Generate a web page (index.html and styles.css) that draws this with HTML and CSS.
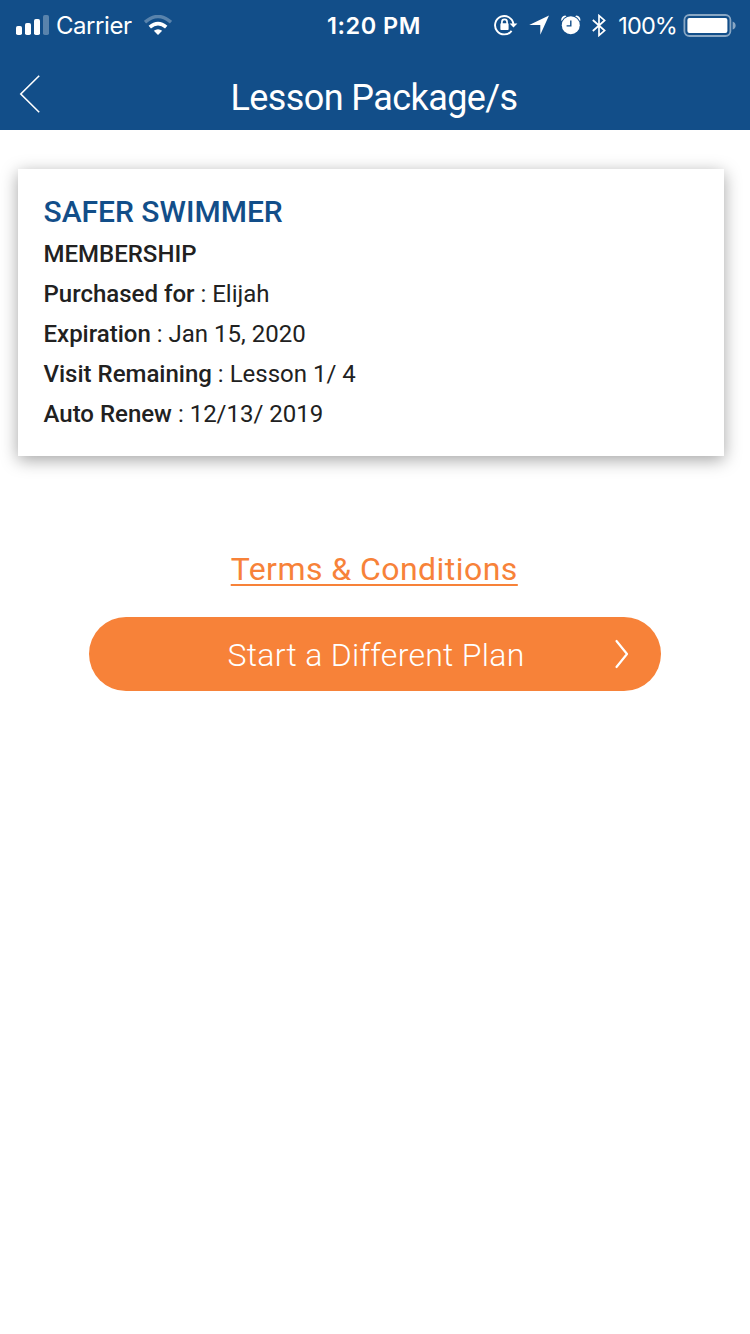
FILE: index.html
```
<!DOCTYPE html>
<html lang="en">
<head>
<meta charset="utf-8">
<title>Lesson Package/s</title>
<link rel="stylesheet" href="styles.css">
</head>
<body>
<header class="top">
  <div class="status">
    <div class="status-left">
      <svg class="signal" width="33" height="20" viewBox="0 0 33 20" fill="#fff">
        <rect x="0" y="11" width="6" height="9" rx="1.8"/>
        <rect x="9" y="8" width="6" height="12" rx="1.8"/>
        <rect x="18" y="4" width="6" height="16" rx="1.8"/>
        <rect x="27" y="0" width="6" height="20" rx="1.8" opacity=".3"/>
      </svg>
      <span class="carrier">Carrier</span>
      <svg class="wifi" width="28" height="20" viewBox="0 0 28 20" fill="none" stroke="#fff">
        <path d="M1 7.2Q14 -4.2 27 7.2" stroke-width="3.4" opacity=".3"/>
        <path d="M5.8 12.2Q14 5.2 22.2 12.2" stroke-width="3.6"/>
        <path d="M14 20L9.8 15.8Q14 12.6 18.2 15.8Z" fill="#fff" stroke="none"/>
      </svg>
    </div>
    <span class="time">1:20 PM</span>
    <div class="status-right">
      <svg class="lock" width="24" height="22" viewBox="0 0 24 22" fill="none" stroke="#fff">
        <path d="M17.6 16.8A9.2 9.2 0 1 1 19.4 10" stroke-width="1.9"/>
        <path d="M15.6 9.4H23.4L19.5 13.6Z" fill="#fff" stroke="none"/>
        <rect x="6.4" y="9.2" width="8.2" height="6.8" rx=".8" fill="#fff" stroke="none"/>
        <path d="M7.9 10V7.9a2.6 2.6 0 0 1 5.2 0V10" stroke-width="1.7"/>
      </svg>
      <svg class="arrow" width="21" height="21" viewBox="0 0 21 21" fill="#fff">
        <path d="M20 .6L11.3 19.8V10.1H.2Z"/>
      </svg>
      <svg class="alarm" width="20" height="20" viewBox="0 0 20 20">
        <circle cx="9.8" cy="10.2" r="9" fill="#fff"/>
        <path d="M9.8 5.6V10.9H5.6" fill="none" stroke="#124e89" stroke-width="1.4"/>
        <path d="M.3 5.7Q-.3 1.5 4.2.5L5.5 1.3Q2.5 2.8.9 5.7ZM19.3 5.7Q19.9 1.5 15.4.5L14.1 1.3Q17.1 2.8 18.7 5.7Z" fill="#fff"/>
      </svg>
      <svg class="bluetooth" width="14" height="23" viewBox="0 0 14 23" fill="none" stroke="#fff" stroke-width="1.7">
        <path d="M.8 6L12.6 16.6L7 21.4V1.6L12.6 6.4L.8 17"/>
      </svg>
      <span class="percent">100%</span>
      <svg class="battery" width="53" height="23" viewBox="0 0 53 23">
        <rect x="1.4" y="1" width="46" height="21" rx="5" fill="none" stroke="#fff" stroke-width="1.8" opacity=".5"/>
        <rect x="4.4" y="4" width="40" height="15" rx="2" fill="#fff"/>
        <path d="M49.6 7.5Q52.6 8.5 52.6 11.5T49.6 15.5Z" fill="#fff" opacity=".5"/>
      </svg>
    </div>
  </div>
  <nav class="nav">
    <svg class="back" width="22" height="38" viewBox="0 0 22 38" fill="none" stroke="#fff" stroke-width="1.6">
      <path d="M20.2 .8L1.8 19L20.2 37.2"/>
    </svg>
    <h1 class="title">Lesson Package/s</h1>
  </nav>
</header>
<main class="content">
  <section class="card">
    <h2 class="plan">SAFER SWIMMER</h2>
    <p class="row"><b>MEMBERSHIP</b></p>
    <p class="row"><b>Purchased for</b> : Elijah</p>
    <p class="row"><b>Expiration</b> : Jan 15, 2020</p>
    <p class="row"><b>Visit Remaining</b> : Lesson 1/ 4</p>
    <p class="row"><b>Auto Renew</b> : 12/13/ 2019</p>
  </section>
  <a class="terms">Terms &amp; Conditions</a>
  <button class="cta">
    <span class="cta-label">Start a Different Plan</span>
    <svg class="chevron" width="16" height="30" viewBox="0 0 16 30" fill="none" stroke="#fff" stroke-width="2.2" stroke-linecap="round" stroke-linejoin="round">
      <path d="M2.5 2L13 15L2.5 28"/>
    </svg>
  </button>
</main>
</body>
</html>
```
FILE: styles.css
```
* { box-sizing: border-box; }
body { margin: 0; min-height: 1334px; background: #fff; font-family: Roboto, sans-serif; color: #212121; }
.top { height: 130px; background: #124e89; color: #fff; }
.status { display: grid; grid-template-columns: 1fr auto 1fr; height: 50px; padding: 0 14px 0 16px; font: 400 24px/50px Inter, sans-serif; }
.status-left, .status-right { display: flex; align-items: center; }
.status-right { justify-content: flex-end; }
.signal, .wifi { margin-bottom: 1px; }
.carrier { margin: 1px 0 0 7px; letter-spacing: -.45px; }
.wifi { margin-left: 12px; }
.time { padding: 1px 4px 0 0; font-weight: 600; font-size: 23.5px; letter-spacing: .5px; }
.percent { margin: 1px 6px 0 12px; font-size: 23.5px; letter-spacing: -.9px; }
.lock { margin-bottom: 1px; }
.arrow { margin: 0 0 1px 11px; }
.alarm { margin: 0 0 2px 11px; }
.bluetooth { margin: 0 0 1px 11px; }
.nav { display: grid; grid-template-columns: 22px 1fr 22px; align-items: center; height: 80px; padding: 0 20px 0 19px; }
.back { margin-bottom: -8px; }
.title { margin: 16px 0 0; padding-right: 1px; text-align: center; font-weight: 400; font-size: 36px; line-height: 42px; letter-spacing: -.58px; }
.content { display: flex; flex-direction: column; align-items: center; padding: 39px 26px 0 18px; }
.card { align-self: stretch; height: 287px; padding: 21px 26px 22px 25.5px; background: #fff; box-shadow: 0 4px 16px rgba(0, 0, 0, .36); }
.plan { margin: 0 0 1px; font-weight: 500; font-size: 30px; line-height: 43px; color: #124e89; }
.row { margin: 0; font-size: 24px; line-height: 40px; }
.row b { font-weight: 500; }
.terms { margin: 91.5px 0 0 6.5px; font-size: 32px; line-height: 42px; letter-spacing: .45px; color: #f78239; text-decoration: underline; text-decoration-thickness: 1.5px; text-underline-offset: 4px; text-decoration-skip-ink: none; }
.cta { display: grid; grid-template-columns: 1fr auto 1fr; align-items: center; width: 572px; height: 74.5px; margin: 27px 0 0 8px; padding: 0 31px; border: 0; border-radius: 38px; background: #f78239; color: #fff; font: 300 32px/40px Roboto, sans-serif; }
.cta-label { grid-column: 2; padding: 3px 0 0 2px; letter-spacing: .28px; }
.chevron { justify-self: end; }
```
